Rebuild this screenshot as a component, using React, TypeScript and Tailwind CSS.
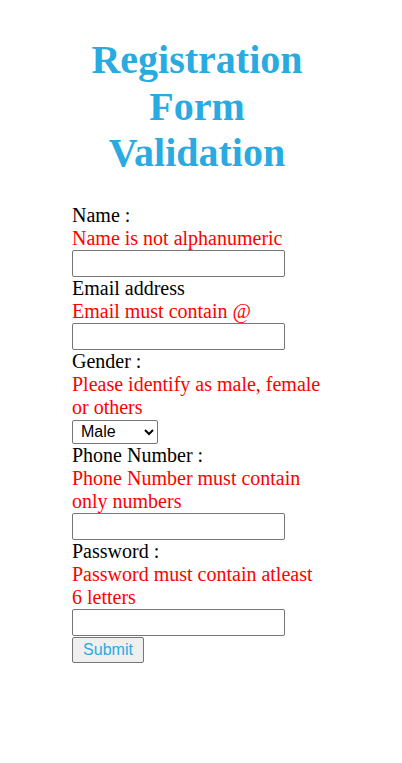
import { useState } from "react";

const serif = "font-['Liberation_Serif','Times_New_Roman',serif]";
const sans = "font-['Liberation_Sans',Arial,sans-serif]";

function Field({ label, error, children }: { label: string; error: string; children: React.ReactNode }) {
  return (
    <div className="flex flex-col items-start">
      <label className="leading-[23px]">{label}</label>
      <span className="leading-[23px] text-[#ff0000]">{error}</span>
      {children}
    </div>
  );
}

const inputCls = "block w-[213px] h-[27px] border border-[#767676] rounded-[2px] bg-white px-[2px] text-[13px] " + sans;

export default function App() {
  const [gender, setGender] = useState("male");

  return (
    <div className={"min-h-[763px] bg-white text-black text-[20px] " + serif}>
      <div className="ml-[72px] w-[250px] pt-[37px]">
        <h1 className="text-center text-[40px] font-bold leading-[46.5px] text-[#29abe2]">
          Registration Form Validation
        </h1>

        <form className="mt-[27px] flex flex-col items-start" onSubmit={(e) => e.preventDefault()}>
          <Field label="Name :" error="Name is not alphanumeric">
            <input type="text" className={inputCls} />
          </Field>
          <Field label="Email address" error="Email must contain @">
            <input type="text" className={inputCls} />
          </Field>
          <Field label="Gender :" error="Please identify as male, female or others">
            <select
              value={gender}
              onChange={(e) => setGender(e.target.value)}
              className={"block mt-[1px] w-[86px] h-[24px] border border-[#767676] rounded-[2px] bg-white pl-[4px] text-[16px] text-black " + sans}
            >
              <option value="male">Male</option>
              <option value="female">Female</option>
              <option value="others">Others</option>
            </select>
          </Field>
          <Field label="Phone Number :" error="Phone Number must contain only numbers">
            <input type="text" className={inputCls} />
          </Field>
          <Field label="Password :" error="Password must contain atleast 6 letters">
            <input type="password" className={inputCls} />
          </Field>
          <button
            type="submit"
            className={"block mt-[1px] h-[26px] w-[72px] border border-[#767676] rounded-[2px] bg-[#efefef] text-[16px] text-[#29abe2] " + sans}
          >
            Submit
          </button>
        </form>
      </div>
    </div>
  );
}
